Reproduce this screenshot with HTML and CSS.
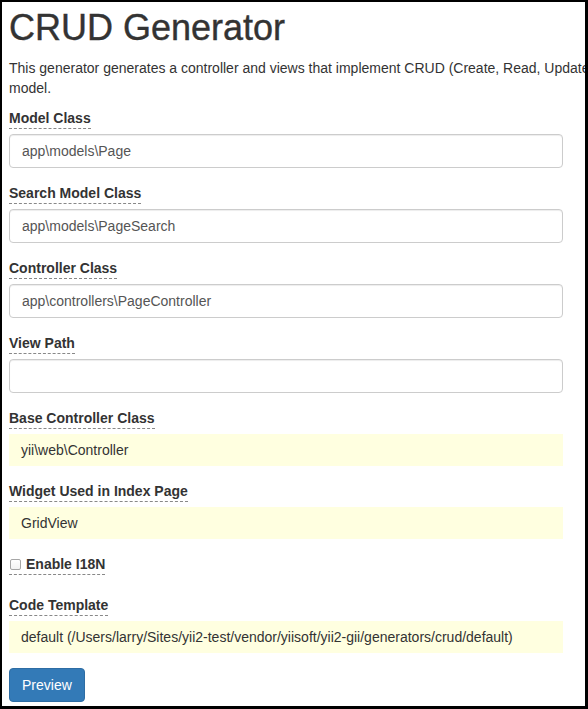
FILE: index.html
```html
<!DOCTYPE html>
<html>
<head>
<meta charset="utf-8">
<title>CRUD Generator</title>
<link rel="stylesheet" href="styles.css">
</head>
<body>
<div class="frame">
  <div class="page">
    <h1>CRUD Generator</h1>
    <p class="intro">This generator generates a controller and views that implement CRUD (Create, Read, Update, Delete) operations for the specified data<br>model.</p>
    <form class="form">
      <div class="form-group">
        <label class="help">Model Class</label>
        <input class="form-control" type="text" value="app\models\Page">
      </div>
      <div class="form-group">
        <label class="help">Search Model Class</label>
        <input class="form-control" type="text" value="app\models\PageSearch">
      </div>
      <div class="form-group">
        <label class="help">Controller Class</label>
        <input class="form-control" type="text" value="app\controllers\PageController">
      </div>
      <div class="form-group">
        <label class="help">View Path</label>
        <input class="form-control" type="text" value="">
      </div>
      <div class="form-group sticky">
        <label class="help">Base Controller Class</label>
        <div class="sticky-value">yii\web\Controller</div>
      </div>
      <div class="form-group sticky">
        <label class="help">Widget Used in Index Page</label>
        <div class="sticky-value">GridView</div>
      </div>
      <div class="form-group checkbox-group">
        <label class="help check-label"><span class="checkbox-box"></span>Enable I18N</label>
      </div>
      <div class="form-group sticky">
        <label class="help">Code Template</label>
        <div class="sticky-value">default (/Users/larry/Sites/yii2-test/vendor/yiisoft/yii2-gii/generators/crud/default)</div>
      </div>
      <div class="actions">
        <button type="button" class="btn-primary">Preview</button>
      </div>
    </form>
  </div>
</div>
</body>
</html>
```
FILE: styles.css
```css
html, body {
  margin: 0;
  padding: 0;
  background: #fff;
}
body {
  font-family: "Liberation Sans", Arial, Helvetica, sans-serif;
  font-size: 14px;
  line-height: 20px;
  color: #333;
}
.frame {
  box-sizing: border-box;
  width: 588px;
  height: 709px;
  border-style: solid;
  border-color: #000;
  border-width: 2px 3px 3px 2px;
  overflow: hidden;
  background: #fff;
}
.page {
  padding: 6px 0 0 7px;
}
h1 {
  margin: 0 0 10px;
  font-size: 36px;
  line-height: 1.1;
  font-weight: normal;
  color: #333;
  white-space: nowrap;
  -webkit-text-stroke: 0.4px #333;
}
.intro {
  margin: 0 0 10px;
  white-space: nowrap;
}
.form {
  width: 554px;
  margin: 0;
}
.form-group {
  margin-bottom: 15px;
}
label.help {
  display: inline-block;
  font-weight: bold;
  margin-bottom: 5px;
  border-bottom: 1px dashed #888;
  line-height: 20px;
}
.form-control {
  display: block;
  box-sizing: border-box;
  width: 100%;
  height: 34px;
  padding: 6px 12px;
  margin: 0;
  font-family: inherit;
  font-size: 14px;
  line-height: 20px;
  color: #555;
  background: #fff;
  border: 1px solid #ccc;
  border-radius: 4px;
  box-shadow: inset 0 1px 1px rgba(0,0,0,.075);
  outline: none;
}
.sticky-value {
  box-sizing: border-box;
  min-height: 32px;
  padding: 6px 12px;
  background: #ffffe0;
  color: #333;
  white-space: pre-wrap;
}
.checkbox-group {
  margin-bottom: 20px;
}
label.help.check-label {
  display: inline-flex;
  align-items: center;
  height: 20px;
  margin-bottom: 0;
}
.checkbox-box {
  flex: none;
  display: block;
  box-sizing: border-box;
  width: 11px;
  height: 11px;
  margin: 1px 5px 0 1px;
  border: 1px solid #a6a6a6;
  border-radius: 2px;
  background: linear-gradient(#fff, #f3f3f3);
}
.actions {
  margin: 0;
}
.btn-primary {
  display: inline-block;
  box-sizing: border-box;
  height: 34px;
  padding: 6px 12px;
  font-family: inherit;
  font-size: 14px;
  line-height: 20px;
  color: #fff;
  background: #337ab7;
  border: 1px solid #2e6da4;
  border-radius: 4px;
  cursor: pointer;
}
```
